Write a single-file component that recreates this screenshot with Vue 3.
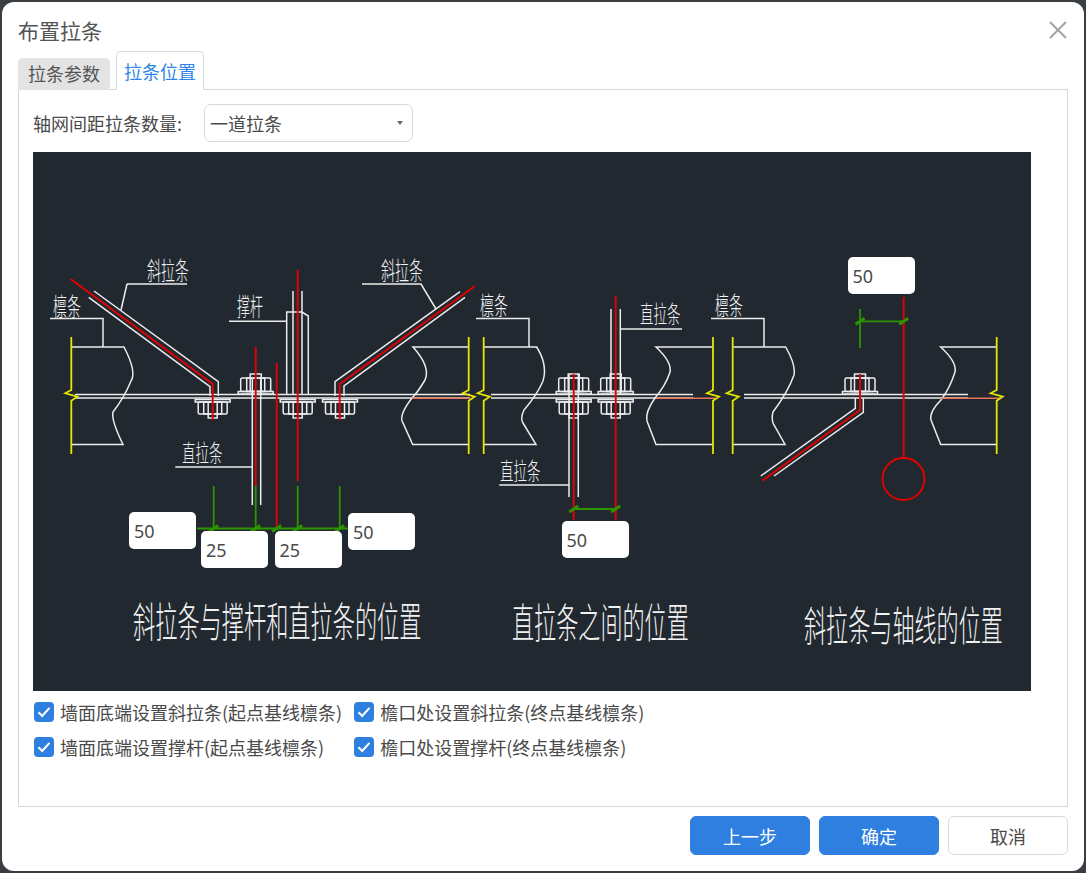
<template>
  <div class="dialog">
    <div class="title-bar">
      <span class="title">布置拉条</span>
      <svg class="close" width="18" height="18" viewBox="0 0 18 18">
        <path d="M1 1L17 17M17 1L1 17" />
      </svg>
    </div>

    <div class="tabs">
      <div class="tab">拉条参数</div>
      <div class="tab active">拉条位置</div>
    </div>

    <div class="panel">
      <div class="field">
        <span class="field-label">轴网间距拉条数量:</span>
        <div class="select">
          <span>一道拉条</span>
          <i class="caret"></i>
        </div>
      </div>

      <div class="drawing">
        <svg class="cad" width="998" height="539" viewBox="33 152 998 539">
          <defs>
            <g id="bolt-under" class="bolt">
              <rect x="-17.5" y="1.5" width="35" height="2.5" />
              <rect x="-14.5" y="4" width="29" height="12" rx="1.5" />
              <rect x="-9" y="4" width="18" height="12" />
              <rect x="-4.5" y="4" width="9" height="16" />
            </g>
            <g id="bolt-over" class="bolt">
              <rect x="-17.5" y="-3" width="35" height="2.5" />
              <rect x="-15" y="-16.5" width="30" height="13.5" rx="1.5" />
              <rect x="-9" y="-16.5" width="18" height="13.5" />
              <rect x="-5.5" y="-20.5" width="11" height="17.5" />
            </g>
          </defs>

          <g class="white">
            <path v-for="(d, i) in whiteLines" :key="i" :d="d" />
            <use v-for="x in underBolts" :key="'u' + x" href="#bolt-under" :x="x" y="398" />
            <use v-for="x in overBolts" :key="'o' + x" href="#bolt-over" :x="x" y="394.5" />
          </g>
          <g class="orange">
            <path d="M412 398.3H470M656 398.3H715M941 398.3H1000" />
          </g>
          <g class="yellow">
            <path v-for="x in yellowX" :key="x" :d="zigzag(x)" />
          </g>
          <g class="red">
            <path v-for="(d, i) in redLines" :key="i" :d="d" />
            <circle cx="903.5" cy="479" r="21" />
          </g>
          <g class="green">
            <path v-for="(d, i) in greenLines" :key="i" :d="d" />
            <path v-for="(t, i) in ticks" :key="'t' + i" class="tick" :d="tick(t[0], t[1])" />
          </g>

          <text
            v-for="t in cadLabels"
            :key="t.text + t.x"
            class="cad-text"
            :font-size="t.size"
            :transform="`translate(${t.x} ${t.y}) scale(1 ${t.stretch})`"
          >{{ t.text }}</text>
        </svg>

        <input
          v-for="box in dimensionBoxes"
          :key="box.x"
          class="dimension"
          :value="box.value"
          :style="{ left: box.x + 'px', top: box.y + 'px' }"
        />
      </div>

      <div class="checks">
        <label v-for="text in checks" :key="text" class="check">
          <span class="box">
            <svg width="14" height="12" viewBox="0 0 14 12">
              <path d="M1.5 6.2L5.2 10L12.5 1.8" />
            </svg>
          </span>
          <span>{{ text }}</span>
        </label>
      </div>
    </div>

    <div class="footer">
      <button class="btn primary">上一步</button>
      <button class="btn primary">确定</button>
      <button class="btn">取消</button>
    </div>
  </div>
</template>

<script setup>
const checks = [
  '墙面底端设置斜拉条(起点基线檩条)',
  '檐口处设置斜拉条(终点基线檩条)',
  '墙面底端设置撑杆(起点基线檩条)',
  '檐口处设置撑杆(终点基线檩条)'
]

// drawing coordinates are page pixels, the svg viewBox takes care of the offset
const whiteLines = [
  // plates
  'M75 394.5H470M75 398H470',
  'M491 394.5H693M491 398H693',
  'M744 394.5H968M744 398H968',
  // purlins, left group
  'M71 347H124Q137 372 131 381Q124 398 113 412Q111 420 123 444.5H71',
  'M468.7 347H413Q431 367 425 380Q418 392 412 398Q398 416 403 423L412.7 444.5H468.7',
  // purlins, middle group
  'M484 347H536.7Q548 365 543 381Q537 395 524 410Q520 418 523 423L536 444.5H484',
  'M713 347H656Q672 362 670 372Q666 385 655 398Q645 412 647 421L656 444.5H713',
  // purlins, right group
  'M732.7 347H785.7Q796 365 794 375Q788 392 773 412Q771 420 774 425L785 444.5H732.7',
  'M996.7 347H940.7Q957 362 955 372Q950 388 941 400Q929 412 931 420L940.7 444.5H996.7',
  // leaders
  'M50 318.5H103V347',
  'M127 284H187M127 284L121 310',
  'M362 284H421L436 309',
  'M229 321.3H286.7',
  'M175.3 467H252.3',
  'M476 318.5H529V347',
  'M711 318.5H764V347',
  'M620.3 329H682',
  'M499.3 485H569',
  // sloped rods, left
  'M94 291L218.3 381.7V396M88.7 297.3L210 386.7V396',
  'M460 291.7L335 381.7V396M465 297.3L344 386V396',
  // straight rods
  'M252.3 378V505M260.7 378V505',
  'M293 291V394M302 291V394',
  'M286.7 394V312H302L308.3 316V394',
  'M569 374V497M578.3 374V497',
  'M611 309V395M620.3 309V395',
  // sloped rod, right group
  'M855.3 398V408.3L760.7 476M863.3 398V412.3L774 476'
]

const redLines = [
  'M70.7 279L212.7 384V420',
  'M475 286L339.7 384V420',
  'M255.7 347V486',
  'M276.7 363V527',
  'M297.7 270V481',
  'M573.7 373.7V520',
  'M615.7 295.7V520',
  'M860 374V410L762.3 480.7',
  'M903.7 297V458'
]

const greenLines = [
  'M197 528.5H348',
  'M213.7 486V529M255.7 486V529M297.7 486V529M339.7 486V529',
  'M573.7 509H615.7',
  'M860 309V348M860 321.3H903.7'
]

const ticks = [
  [213.7, 528.5], [255.7, 528.5], [276.7, 528.5], [297.7, 528.5], [339.7, 528.5],
  [573.7, 509], [615.7, 509], [860, 321.3], [903.7, 321.3]
]

const yellowX = [71.3, 468.7, 483.7, 713, 732.7, 996.7]
const underBolts = [212.7, 297.7, 340, 573.7, 615.7]
const overBolts = [255.7, 573.7, 615.7, 860]

const zigzag = (x) =>
  `M${x} 337V390L${x - 6} 393.3L${x + 6} 396.7L${x} 400.7V454`

const tick = (x, y) => `M${x - 4.5} ${y + 3}L${x + 4.5} ${y - 3}`

const cadLabels = [
  { text: '斜拉条', x: 147, y: 280, size: 14, stretch: 1.75 },
  { text: '斜拉条', x: 381, y: 280, size: 14, stretch: 1.75 },
  { text: '檩条', x: 53, y: 316, size: 14, stretch: 1.8 },
  { text: '撑杆', x: 237, y: 316, size: 13, stretch: 1.9 },
  { text: '直拉条', x: 182, y: 462, size: 13.5, stretch: 1.75 },
  { text: '檩条', x: 480, y: 315, size: 14, stretch: 1.8 },
  { text: '檩条', x: 715, y: 315, size: 14, stretch: 1.8 },
  { text: '直拉条', x: 640, y: 323, size: 13.5, stretch: 1.75 },
  { text: '直拉条', x: 500, y: 480, size: 13.5, stretch: 1.75 },
  { text: '斜拉条与撑杆和直拉条的位置', x: 133, y: 637, size: 22.2, stretch: 1.85 },
  { text: '直拉条之间的位置', x: 512, y: 638, size: 22.1, stretch: 1.85 },
  { text: '斜拉条与轴线的位置', x: 804, y: 641, size: 22.1, stretch: 1.85 }
]

// input positions relative to the drawing
const dimensionBoxes = [
  { value: '50', x: 96, y: 360 },
  { value: '25', x: 168, y: 379 },
  { value: '25', x: 241.5, y: 379 },
  { value: '50', x: 315, y: 361 },
  { value: '50', x: 528.5, y: 369 },
  { value: '50', x: 814.5, y: 105 }
]
</script>

<style>
html,
body {
  background: #3a3e43;
}
</style>

<style scoped>
.dialog {
  box-sizing: border-box;
  width: 1082px;
  height: 869px;
  margin: 2px;
  padding: 0 16px;
  background: #fff;
  border-radius: 12px;
  font-family: "Noto Sans CJK SC", "Noto Sans", sans-serif;
  font-size: 18px;
  color: #4a4a4a;
  overflow: hidden;
}

.title-bar {
  display: flex;
  align-items: center;
  justify-content: space-between;
  height: 50px;
  padding-top: 6px;
  padding-right: 1px;
  box-sizing: border-box;
}

.title {
  font-size: 21px;
  line-height: 30px;
  color: #555;
}

.close path {
  fill: none;
  stroke: #a3a3a3;
  stroke-width: 2;
}

.tabs {
  display: flex;
  align-items: flex-end;
  gap: 6px;
  height: 38px;
  position: relative;
  z-index: 1;
  margin-bottom: -1px;
}

.tab {
  box-sizing: border-box;
  width: 92px;
  height: 32px;
  line-height: 31px;
  text-align: center;
  background: #e3e3e3;
  border-radius: 5px 5px 0 0;
  color: #555;
}

.tab.active {
  width: 88px;
  height: 39px;
  line-height: 38px;
  background: #fff;
  color: #2e86e8;
  border: 1.5px solid #d3d8de;
  border-bottom: 0;
}

.panel {
  box-sizing: border-box;
  height: 718px;
  padding: 14px 14px 0;
  border: 1.5px solid #d3d8de;
}

.field {
  display: flex;
  align-items: center;
  height: 38px;
}

.field-label {
  width: 171px;
}

.select {
  box-sizing: border-box;
  display: flex;
  align-items: center;
  justify-content: space-between;
  width: 209px;
  height: 38px;
  padding: 0 9px 0 5px;
  border: 1.5px solid #d8d8d8;
  border-radius: 7px;
}

.caret {
  width: 0;
  height: 0;
  border-left: 3.5px solid transparent;
  border-right: 3.5px solid transparent;
  border-top: 4px solid #666;
}

.drawing {
  position: relative;
  width: 998px;
  height: 539px;
  margin-top: 10px;
  background: #212830;
}

.cad {
  display: block;
}

.cad path,
.cad rect,
.cad circle {
  fill: none;
  stroke-width: 1.5;
}

.white path,
.bolt rect {
  stroke: #ececec;
}

.orange path {
  stroke: #e8735a;
}

.yellow path {
  stroke: #e6e600;
  stroke-width: 1.8;
}

.red path,
.red circle {
  stroke: #e60000;
  stroke-width: 1.9;
}

.green path {
  stroke: #2c9400;
  stroke-width: 1.8;
}

.green path.tick {
  stroke-width: 3;
}

.cad-text {
  fill: #f2f2f2;
  font-weight: 300;
}

.dimension {
  position: absolute;
  box-sizing: border-box;
  width: 67px;
  height: 37px;
  padding: 0 5px;
  border: 0;
  border-radius: 5px;
  background: #fff;
  font-family: "Noto Sans", sans-serif;
  font-size: 18px;
  color: #4a4a4a;
  outline: none;
}

.checks {
  display: grid;
  grid-template-columns: max-content max-content;
  column-gap: 12px;
  row-gap: 14px;
  margin-top: 10px;
  padding-left: 1px;
}

.check {
  display: flex;
  align-items: center;
  gap: 6px;
  height: 21px;
  white-space: nowrap;
}

.box {
  display: flex;
  align-items: center;
  justify-content: center;
  width: 20px;
  height: 20px;
  background: #2e7fe0;
  border-radius: 4px;
}

.box path {
  fill: none;
  stroke: #fff;
  stroke-width: 2;
}

.footer {
  display: flex;
  justify-content: flex-end;
  gap: 9px;
  margin-top: 9px;
}

.btn {
  box-sizing: border-box;
  width: 120px;
  height: 39px;
  padding: 0;
  border: 1.5px solid #d8d8d8;
  border-radius: 6px;
  background: #fff;
  font-family: inherit;
  font-size: 18px;
  color: #4a4a4a;
}

.btn.primary {
  background: #2e7fe0;
  border-color: #2e7fe0;
  color: #fff;
}
</style>
